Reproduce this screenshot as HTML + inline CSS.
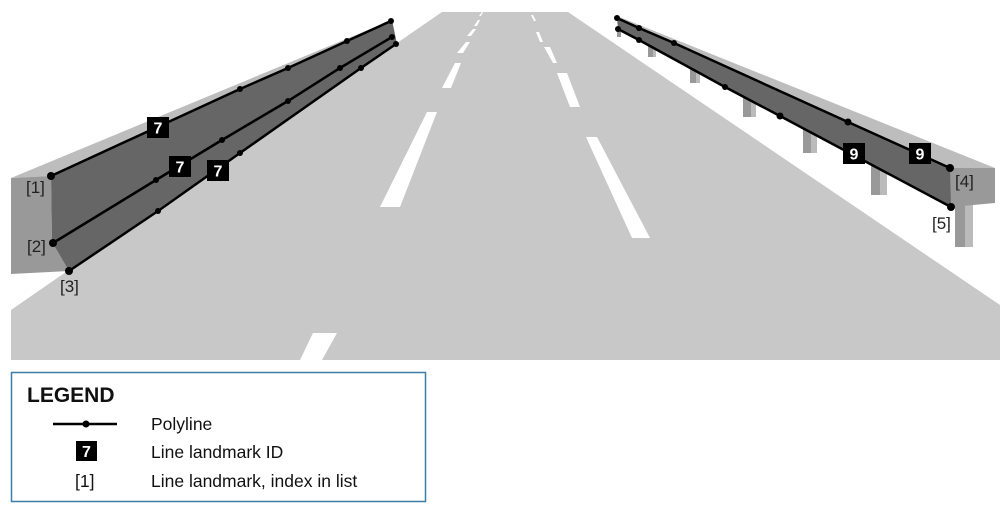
<!DOCTYPE html>
<html><head><meta charset="utf-8"><style>
body{margin:0;background:#fff;width:1000px;height:514px;overflow:hidden;font-family:"Liberation Sans",Arial,sans-serif}
svg{position:absolute;left:0;top:0}
</style></head><body>
<svg width="1000" height="514" viewBox="0 0 1000 514" font-family="Liberation Sans, Arial, sans-serif">
<polygon points="442,12 568,12 1000,305 1000,360 11,360 11,310" fill="#c8c8c8"/>
<g fill="#fff">
<polygon points="380,207 400,207 437,112 427,112"/>
<polygon points="442,88 451,88 461,63 455,63"/>
<polygon points="457,53 463,53 470,42 466,42"/>
<polygon points="467,36 471,36 476,29 473,29"/>
<polygon points="474,26 477,26 480,20 478,20"/>
<polygon points="479,16 481,16 483,12 482,12"/>
<polygon points="300,360 322,360 337,333 313,333"/>
<polygon points="586,137 597,137 650,238 632,238"/>
<polygon points="557,73 567,73 580,107 570,107"/>
<polygon points="544,47 550,47 557,63 553,63"/>
<polygon points="536,32 539,32 543,42 540,42"/>
<polygon points="531,15 533,15 536,21 534,21"/>
</g>
<polygon points="11,178 392,20 51,176" fill="#bdbdbd"/>
<polygon points="11,178 51,176 52,242 69,271 11,274" fill="#999"/>
<polygon points="51,176 392,20 397,44 69,271 52,242" fill="#666"/>
<g stroke="#000" stroke-width="2.5" fill="none">
<polyline points="51,176 240,89 288,68 347,41 391,21"/>
<polyline points="53,243 156,180 222,140 288,101 340,68 392,37"/>
<polyline points="69,271 158,211 240,153 361,68 396,44"/>
</g>
<g fill="#000">
<circle cx="51" cy="176" r="4"/><circle cx="240" cy="89" r="3"/><circle cx="288" cy="68" r="3"/><circle cx="347" cy="41" r="3"/><circle cx="391" cy="21" r="3"/>
<circle cx="53" cy="243" r="4"/><circle cx="156" cy="180" r="3"/><circle cx="222" cy="140" r="3"/><circle cx="288" cy="101" r="3"/><circle cx="340" cy="68" r="3"/><circle cx="392" cy="37" r="3"/>
<circle cx="69" cy="271" r="4"/><circle cx="158" cy="211" r="3"/><circle cx="240" cy="153" r="3"/><circle cx="361" cy="68" r="3"/><circle cx="396" cy="44" r="3"/>
</g>
<g>
<rect x="617" y="29" width="4" height="8" fill="#999"/>
<rect x="648" y="45" width="8" height="12" fill="#999"/><rect x="653" y="45" width="3" height="12" fill="#bbb"/>
<rect x="690" y="68" width="10" height="15" fill="#999"/><rect x="696" y="68" width="4" height="15" fill="#bbb"/>
<rect x="743" y="96" width="13" height="21" fill="#999"/><rect x="751" y="96" width="5" height="21" fill="#bbb"/>
<rect x="803" y="128" width="14" height="25" fill="#999"/><rect x="811" y="128" width="6" height="25" fill="#bbb"/>
<rect x="871" y="164" width="16" height="31" fill="#999"/><rect x="880" y="164" width="7" height="31" fill="#bbb"/>
<rect x="955" y="205" width="18" height="42" fill="#999"/><rect x="965" y="205" width="8" height="42" fill="#bbb"/>
</g>
<polygon points="617,16 995,168 950,168 617,18" fill="#bdbdbd"/>
<polygon points="948,168 995,168 995,203 951,207" fill="#999"/>
<polygon points="617,18 950,168 951,207 618,29" fill="#666"/>
<g stroke="#000" stroke-width="2.5" fill="none">
<polyline points="617,18 639,28 674,43 848,122 950,168"/>
<polyline points="618,29 639,40 725,87 780,116 951,207"/>
</g>
<g fill="#000">
<circle cx="617" cy="18" r="3"/><circle cx="639" cy="28" r="3"/><circle cx="674" cy="43" r="3"/><circle cx="848" cy="122" r="3.5"/><circle cx="950" cy="168" r="4"/>
<circle cx="618" cy="29" r="3"/><circle cx="639" cy="40" r="3"/><circle cx="725" cy="87" r="3"/><circle cx="780" cy="116" r="3.5"/><circle cx="951" cy="207" r="4"/>
</g>
<g font-weight="bold" font-size="16" text-anchor="middle">
<rect x="147" y="117" width="22" height="21" fill="#000"/><text x="158" y="133.5" fill="#fff">7</text>
<rect x="169" y="156" width="22" height="21" fill="#000"/><text x="180" y="172.5" fill="#fff">7</text>
<rect x="207" y="160" width="22" height="21" fill="#000"/><text x="218" y="176.5" fill="#fff">7</text>
<rect x="843" y="143" width="22" height="21" fill="#000"/><text x="854" y="159.5" fill="#fff">9</text>
<rect x="909" y="143" width="22" height="21" fill="#000"/><text x="920" y="159.5" fill="#fff">9</text>
</g>
<g font-size="17" fill="#222">
<text x="26" y="193">[1]</text>
<text x="27" y="252">[2]</text>
<text x="60" y="292">[3]</text>
<text x="955" y="187">[4]</text>
<text x="932" y="229">[5]</text>
</g>
<rect x="11.5" y="372.5" width="414" height="129" fill="#fff" stroke="#3a7fa6" stroke-width="1.5"/>
<text x="27" y="402" font-size="21" font-weight="bold" fill="#111">LEGEND</text>
<line x1="53" y1="424" x2="117" y2="424" stroke="#000" stroke-width="2.5"/>
<circle cx="86" cy="424" r="3.5" fill="#000"/>
<rect x="76" y="441" width="21" height="20" fill="#000"/>
<text x="86.5" y="457" font-size="16" font-weight="bold" fill="#fff" text-anchor="middle">7</text>
<text x="75" y="487" font-size="17.5" fill="#111">[1]</text>
<g font-size="17.5" fill="#111">
<text x="151" y="430">Polyline</text>
<text x="151" y="458">Line landmark ID</text>
<text x="151" y="487">Line landmark, index in list</text>
</g>
</svg>
</body></html>
